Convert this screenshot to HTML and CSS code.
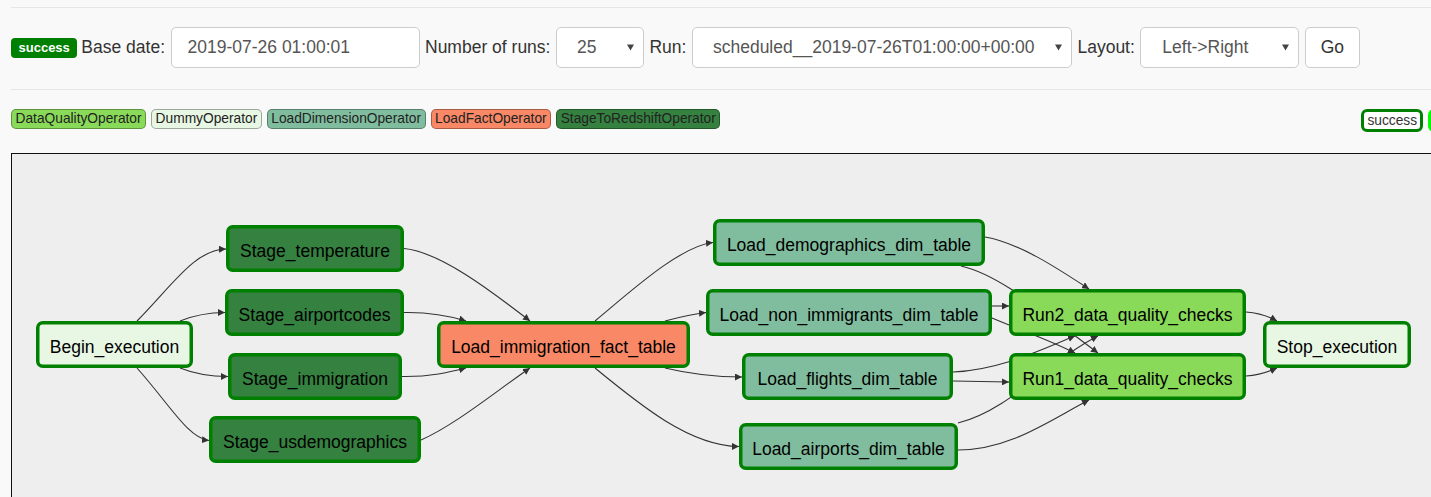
FILE: index.html
```html
<!DOCTYPE html>
<html lang="en">
<head>
<meta charset="utf-8">
<title>DAG Graph View</title>
<link rel="stylesheet" href="styles.css">
</head>
<body>
<div class="page">
  <hr class="rule">
  <form class="controls">
    <span class="badge-success">success</span>
    <span class="ctl-label">Base date:</span>
    <div class="field field-date">2019-07-26 01:00:01</div>
    <span class="ctl-label">Number of runs:</span>
    <div class="field select sel-runs"><span>25</span><svg class="caret" width="7" height="7" viewBox="0 0 7 7"><polygon points="0,0.5 7,0.5 3.5,6.5"/></svg></div>
    <span class="ctl-label">Run:</span>
    <div class="field select sel-run"><span>scheduled__2019-07-26T01:00:00+00:00</span><svg class="caret" width="7" height="7" viewBox="0 0 7 7"><polygon points="0,0.5 7,0.5 3.5,6.5"/></svg></div>
    <span class="ctl-label">Layout:</span>
    <div class="field select sel-layout"><span>Left-&gt;Right</span><svg class="caret" width="7" height="7" viewBox="0 0 7 7"><polygon points="0,0.5 7,0.5 3.5,6.5"/></svg></div>
    <div class="field btn-go">Go</div>
  </form>
  <hr class="rule rule-mid">
  <div class="legend-row">
    <div class="legend">
      <span class="op op-dq">DataQualityOperator</span>
      <span class="op op-dummy">DummyOperator</span>
      <span class="op op-dim">LoadDimensionOperator</span>
      <span class="op op-fact">LoadFactOperator</span>
      <span class="op op-stage">StageToRedshiftOperator</span>
    </div>
    <div class="states">
      <span class="state state-success">success</span>
      <span class="state state-running">running</span>
    </div>
  </div>
  <div class="graph-frame">
    <svg class="graph" width="1474" height="360" viewBox="0 0 1474 360">
      <defs>
        <marker id="arrow" viewBox="0 0 10 10" refX="10" refY="5" markerWidth="7" markerHeight="7" markerUnits="userSpaceOnUse" orient="auto">
          <path d="M0,0 L10,5 L0,10 z" fill="#333"/>
        </marker>
      </defs>
      <g transform="translate(-12,-154)">
        <g class="edges" marker-end="url(#arrow)">
          <path d="M137,321 C175,282 195,250 226,249"/>
          <path d="M180,321 C195,315 207,312.5 225,312.5"/>
          <path d="M180,368 C195,374 210,376.5 228,376.5"/>
          <path d="M137,368 C170,405 188,438 209,440.5"/>
          <path d="M404,248.5 C440,252 490,290 530,321"/>
          <path d="M404,312.5 C430,312 450,316 466,321"/>
          <path d="M402,376.5 C430,377 450,372 466,368"/>
          <path d="M421,440 C455,425 495,392 530,368"/>
          <path d="M595,321 C630,292 680,246 713,242.5"/>
          <path d="M665,321 C680,317 692,314 706,312.5"/>
          <path d="M665,368 C690,374 715,377 742,377"/>
          <path d="M595,368 C640,405 690,446 739,446.5"/>
          <path d="M985,237 C1020,243 1060,270 1089,289"/>
          <path d="M961,266 C1000,275 1040,310 1098,353"/>
          <path d="M992,306 L1009,306"/>
          <path d="M992,318 C1020,330 1050,340 1075,353"/>
          <path d="M953,372 C1000,370 1040,350 1075,336"/>
          <path d="M953,381 L1009,382"/>
          <path d="M958,423 C1010,410 1050,360 1098,336"/>
          <path d="M958,450 C1010,450 1050,420 1089,400"/>
          <path d="M1246,312 C1260,313 1268,316 1277,321"/>
          <path d="M1246,376 C1260,375 1268,372 1277,368"/>
        </g>
        <g class="nodes">
          <g class="node dummy"><rect x="37.75" y="322.75" width="153.5" height="43.5" rx="5"/><text x="114.5" y="352.5">Begin_execution</text></g>
          <g class="node stage"><rect x="227.75" y="226.75" width="174.5" height="43.5" rx="5"/><text x="315" y="256.5">Stage_temperature</text></g>
          <g class="node stage"><rect x="226.75" y="290.75" width="175.5" height="43.5" rx="5"/><text x="314.5" y="320.5">Stage_airportcodes</text></g>
          <g class="node stage"><rect x="229.75" y="354.75" width="170.5" height="43.5" rx="5"/><text x="315" y="384.5">Stage_immigration</text></g>
          <g class="node stage"><rect x="210.75" y="417.75" width="208.5" height="43.5" rx="5"/><text x="315" y="447.5">Stage_usdemographics</text></g>
          <g class="node fact"><rect x="438.75" y="322.75" width="249.5" height="43.5" rx="5"/><text x="563.5" y="352.5">Load_immigration_fact_table</text></g>
          <g class="node dim"><rect x="714.75" y="220.75" width="268.5" height="43.5" rx="5"/><text x="849" y="250.5">Load_demographics_dim_table</text></g>
          <g class="node dim"><rect x="707.75" y="290.75" width="282.5" height="43.5" rx="5"/><text x="849" y="320.5">Load_non_immigrants_dim_table</text></g>
          <g class="node dim"><rect x="743.75" y="354.75" width="207.5" height="43.5" rx="5"/><text x="847.5" y="384.5">Load_flights_dim_table</text></g>
          <g class="node dim"><rect x="740.75" y="424.75" width="215.5" height="43.5" rx="5"/><text x="848.5" y="454.5">Load_airports_dim_table</text></g>
          <g class="node dq"><rect x="1010.75" y="290.75" width="233.5" height="43.5" rx="5"/><text x="1127.5" y="320.5">Run2_data_quality_checks</text></g>
          <g class="node dq"><rect x="1010.75" y="354.75" width="233.5" height="43.5" rx="5"/><text x="1127.5" y="384.5">Run1_data_quality_checks</text></g>
          <g class="node dummy"><rect x="1264.75" y="322.75" width="144.5" height="43.5" rx="5"/><text x="1337" y="352.5">Stop_execution</text></g>
        </g>
      </g>
    </svg>
  </div>
</div>
</body>
</html>
```
FILE: styles.css
```css
html, body {
  margin: 0;
  padding: 0;
}
body {
  background: #f9f9f9;
  font-family: "Liberation Sans", Arial, sans-serif;
  color: #333;
  overflow: hidden;
  height: 497px;
}
.page {
  width: 1475px;
  padding: 7px 0 0 11px;
}
.rule {
  border: 0;
  border-top: 1px solid #e6e6e6;
  height: 0;
  margin: 0;
}
.rule-mid {
  margin-top: 21px;
}
.controls {
  margin: 19px 0 0 0;
  height: 41px;
  display: flex;
  align-items: center;
  gap: 5.5px;
  font-size: 17.5px;
}
.badge-success {
  background: #008000;
  color: #fff;
  font-weight: bold;
  font-size: 13px;
  height: 20px;
  line-height: 20px;
  padding: 0 7.5px;
  border-radius: 4px;
  margin-right: -1.5px;
}
.ctl-label {
  color: #333;
  white-space: nowrap;
}
.field {
  box-sizing: border-box;
  height: 41px;
  background: #fff;
  border: 1px solid #ccc;
  border-radius: 5px;
  color: #555;
  display: flex;
  align-items: center;
  white-space: nowrap;
}
.field-date {
  width: 249px;
  padding-left: 16px;
}
.select {
  justify-content: space-between;
  padding: 0 9px 0 20px;
}
.sel-runs { width: 88px; }
.sel-run { width: 380px; }
.sel-layout { width: 159px; padding-left: 21px; }
.caret {
  display: block;
  fill: #444;
}
.btn-go {
  width: 55px;
  justify-content: center;
  color: #333;
}
.legend-row {
  margin-top: 19px;
  display: flex;
  justify-content: space-between;
  align-items: flex-start;
  font-size: 13.75px;
}
.legend {
  display: flex;
  gap: 5px;
}
.op {
  box-sizing: border-box;
  height: 20px;
  line-height: 18px;
  padding: 0 3.5px;
  border: 1px solid rgba(0, 0, 0, 0.32);
  border-radius: 5px;
  color: #222;
}
.op-dq { background: #89DA59; }
.op-dummy { background: #e8f7e4; }
.op-dim { background: #80BD9E; }
.op-fact { background: #F98866; }
.op-stage { background: #358140; }
.states {
  display: flex;
  gap: 5px;
}
.state {
  box-sizing: border-box;
  height: 23px;
  line-height: 17px;
  padding: 0 3px;
  background: #fff;
  border: 3px solid #008000;
  border-radius: 6px;
  color: #333;
}
.state-running {
  border-color: #00ff00;
}
.graph-frame {
  margin-top: 21px;
  border: 1px solid #111;
  background: #eeeeee;
  height: 380px;
}
.graph {
  display: block;
}
.edges path {
  fill: none;
  stroke: #333;
  stroke-width: 1.1px;
}
.node rect {
  stroke: #008000;
  stroke-width: 3.5px;
}
.node text {
  font-family: "Liberation Sans", Arial, sans-serif;
  font-size: 17.5px;
  fill: #000;
  text-anchor: middle;
}
.dummy rect { fill: #e8f7e4; }
.stage rect { fill: #358140; }
.fact rect { fill: #F98866; }
.dim rect { fill: #80BD9E; }
.dq rect { fill: #89DA59; }
```
